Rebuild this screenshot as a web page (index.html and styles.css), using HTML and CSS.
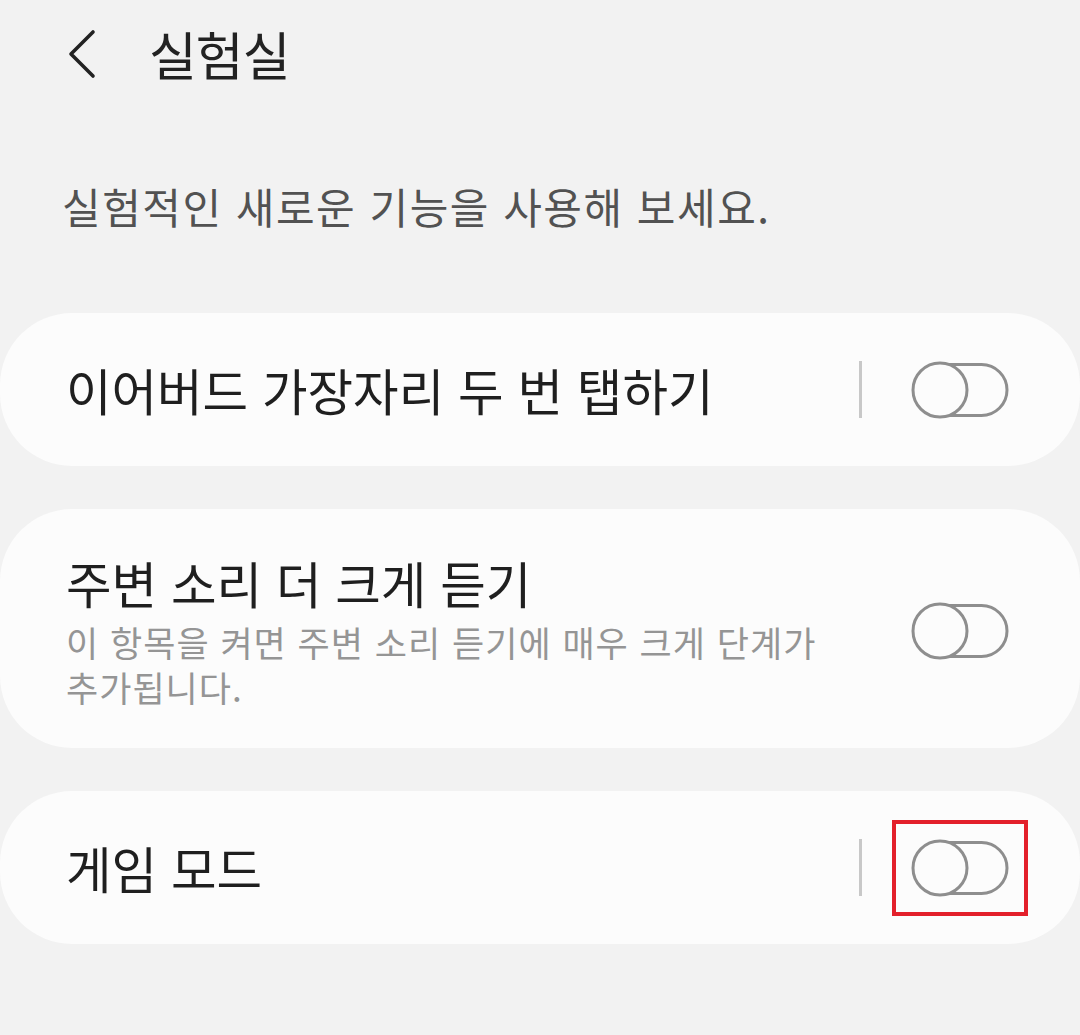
FILE: index.html
```html
<!DOCTYPE html>
<html lang="ko">
<head>
<meta charset="utf-8">
<title>실험실</title>
<link rel="stylesheet" href="styles.css">
</head>
<body>
<div class="page">
  <header class="appbar">
    <button class="back" aria-label="뒤로">
      <svg width="30" height="50" viewBox="0 0 30 50"><path d="M26 3 L4 25 L26 47" fill="none" stroke="#222" stroke-width="3.6" stroke-linecap="round" stroke-linejoin="round"/></svg>
    </button>
    <h1 class="title">실험실</h1>
  </header>

  <p class="intro">실험적인 새로운 기능을 사용해 보세요.</p>

  <div class="list">
    <div class="card">
      <div class="text">
        <div class="label">이어버드 가장자리 두 번 탭하기</div>
      </div>
      <span class="divider"></span>
      <span class="toggle">
        <svg width="98" height="58" viewBox="0 0 98 58"><rect x="7" y="3.5" width="89" height="51" rx="25.5" fill="none" stroke="#8e8e8e" stroke-width="3"/><circle cx="29" cy="29" r="27" fill="#fcfcfc" stroke="#8e8e8e" stroke-width="3"/></svg>
      </span>
    </div>

    <div class="card tall">
      <div class="text">
        <div class="label">주변 소리 더 크게 듣기</div>
        <div class="desc">이 항목을 켜면 주변 소리 듣기에 매우 크게 단계가 추가됩니다.</div>
      </div>
      <span class="toggle">
        <svg width="98" height="58" viewBox="0 0 98 58"><rect x="7" y="3.5" width="89" height="51" rx="25.5" fill="none" stroke="#8e8e8e" stroke-width="3"/><circle cx="29" cy="29" r="27" fill="#fcfcfc" stroke="#8e8e8e" stroke-width="3"/></svg>
      </span>
    </div>

    <div class="card">
      <div class="text">
        <div class="label">게임 모드</div>
      </div>
      <span class="divider"></span>
      <span class="toggle highlighted">
        <svg width="98" height="58" viewBox="0 0 98 58"><rect x="7" y="3.5" width="89" height="51" rx="25.5" fill="none" stroke="#8e8e8e" stroke-width="3"/><circle cx="29" cy="29" r="27" fill="#fcfcfc" stroke="#8e8e8e" stroke-width="3"/></svg>
      </span>
    </div>
  </div>
</div>
</body>
</html>
```

FILE: styles.css
```css
* { box-sizing: border-box; }

html, body {
  margin: 0;
  padding: 0;
  background: #f2f2f2;
}

body {
  font-family: "Noto Sans CJK KR", "Noto Sans", sans-serif;
  color: #222;
  width: 1080px;
  height: 1035px;
  overflow: hidden;
}

.page {
  display: flex;
  flex-direction: column;
}

.appbar {
  height: 108px;
  display: flex;
  align-items: center;
  padding-left: 67px;
}

.back {
  border: 0;
  background: none;
  padding: 0;
  margin: 0;
  width: 30px;
  height: 50px;
  display: flex;
  align-items: center;
  justify-content: center;
}

.back svg { display: block; }

.title {
  margin: 0 0 0 52px;
  font-size: 52px;
  font-weight: 400;
  letter-spacing: -1px;
  line-height: 60px;
  color: #222;
}

.intro {
  margin: 72px 0 0 0;
  padding-left: 62px;
  font-size: 42px;
  letter-spacing: 1.5px;
  line-height: 52px;
  color: #525252;
}

.list {
  margin-top: 81px;
  display: flex;
  flex-direction: column;
  gap: 43px;
}

.card {
  width: 1080px;
  min-height: 153px;
  background: #fcfcfc;
  border-radius: 72px;
  display: flex;
  align-items: center;
  padding: 0 72px 0 66px;
}

.card.tall {
  min-height: 239px;
  padding-top: 42px;
  padding-bottom: 38px;
}

.text {
  flex: 1;
  min-width: 0;
  padding-right: 60px;
}

.label {
  font-size: 49.5px;
  letter-spacing: 0;
  line-height: 60px;
  color: #1f1f1f;
}

.desc {
  margin-top: 6px;
  font-size: 35px;
  letter-spacing: 1px;
  line-height: 45px;
  color: #959595;
  word-break: keep-all;
}

.divider {
  width: 3px;
  height: 57px;
  background: #c8c8c8;
  margin-right: 49px;
  flex: none;
}

.toggle {
  flex: none;
  display: block;
  width: 98px;
  height: 58px;
  margin-right: -1px;
}

.toggle svg { display: block; }

.toggle.highlighted {
  outline: 4px solid #e3202b;
  outline-offset: 15px;
}
```
